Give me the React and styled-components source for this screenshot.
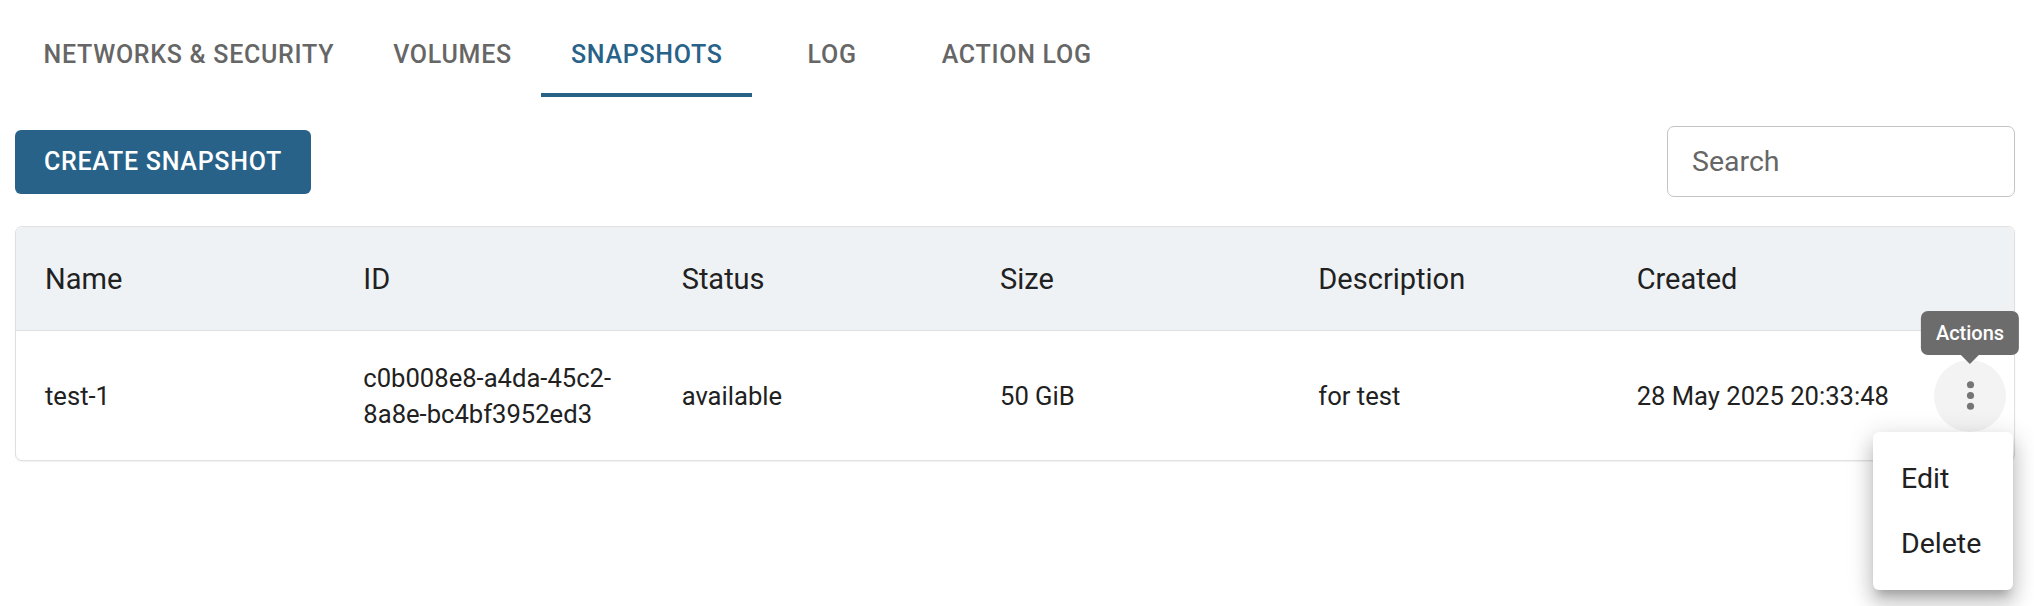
import React from "react";
import styled, { createGlobalStyle, css } from "styled-components";

const GlobalStyle = createGlobalStyle`
  html, body {
    margin: 0;
    padding: 0;
    background: #ffffff;
    font-family: Roboto, "Noto Sans", "Liberation Sans", sans-serif;
    color: #212121;
  }
  * { box-sizing: border-box; }
`;

const BLUE = "#296289";

const Page = styled.div`
  display: flex;
  flex-direction: column;
  min-height: 606px;
  padding: 12px 19px 0 15px;
  width: 2034px;
`;

const TabBar = styled.nav`
  display: flex;
  height: 85px;
  margin-left: -1px;
`;

const Tab = styled.div`
  position: relative;
  display: flex;
  align-items: center;
  justify-content: center;
  height: 85px;
  min-width: 160px;
  padding: 0 29.5px;
  font-size: 25px;
  font-weight: 500;
  letter-spacing: 0.72px;
  text-transform: uppercase;
  color: ${(p) => (p.$active ? BLUE : "#666666")};
  cursor: pointer;
  ${(p) =>
    p.$active &&
    css`
      &::after {
        content: "";
        position: absolute;
        left: 0;
        right: 0;
        bottom: 0;
        height: 4px;
        background: ${BLUE};
      }
    `}
`;

const Toolbar = styled.div`
  display: flex;
  align-items: center;
  justify-content: space-between;
  height: 71px;
  margin-top: 29px;
`;

const PrimaryButton = styled.button`
  height: 64px;
  padding: 0 29px;
  border: none;
  border-radius: 6px;
  background: ${BLUE};
  color: #ffffff;
  font-family: inherit;
  font-size: 25px;
  font-weight: 500;
  letter-spacing: 0.72px;
  text-transform: uppercase;
  cursor: pointer;
`;

const SearchField = styled.input`
  width: 348px;
  height: 71px;
  padding: 0 24px;
  border: 1px solid #c4c4c4;
  border-radius: 7px;
  font-family: inherit;
  font-size: 28.5px;
  color: #212121;
  outline: none;
  &::placeholder {
    color: #666666;
    opacity: 1;
  }
`;

const TableCard = styled.div`
  margin-top: 29px;
  border: 1px solid #e0e0e0;
  border-radius: 7px;
  box-shadow: 0 1px 2px rgba(0, 0, 0, 0.06);
  background: #ffffff;
`;

const Row = styled.div`
  display: grid;
  grid-template-columns: repeat(6, 1fr) 88px;
`;

const HeaderRow = styled(Row)`
  height: 104px;
  background: #eff2f5;
  border-bottom: 1px solid #e0e0e0;
  border-radius: 7px 7px 0 0;
`;

const BodyRow = styled(Row)`
  height: 129px;
`;

const HeadCell = styled.div`
  display: flex;
  align-items: center;
  padding: 0 29px;
  font-size: 29px;
  font-weight: 400;
  color: #212121;
`;

const Cell = styled.div`
  display: flex;
  align-items: center;
  padding: 0 29px;
  font-size: 25.6px;
  line-height: 36px;
  color: #212121;
`;

const ActionCell = styled.div`
  display: flex;
  align-items: center;
  justify-content: center;
`;

const Anchor = styled.div`
  position: relative;
  width: 72px;
  height: 72px;
`;

const KebabButton = styled.button`
  display: flex;
  align-items: center;
  justify-content: center;
  width: 72px;
  height: 72px;
  padding: 0;
  border: none;
  border-radius: 50%;
  background: #f3f3f3;
  cursor: pointer;
`;

const Tooltip = styled.div`
  position: absolute;
  bottom: calc(100% + 5px);
  left: 50%;
  transform: translateX(-50%);
  display: flex;
  align-items: center;
  justify-content: center;
  height: 44px;
  padding: 0 15px;
  border-radius: 7px;
  background: #6c6c6c;
  color: #ffffff;
  font-size: 20px;
  font-weight: 500;
  white-space: nowrap;
  z-index: 3;
  &::after {
    content: "";
    position: absolute;
    top: 100%;
    left: 50%;
    transform: translateX(-50%);
    border-left: 9px solid transparent;
    border-right: 9px solid transparent;
    border-top: 9px solid #6c6c6c;
  }
`;

const Menu = styled.ul`
  position: absolute;
  top: 100%;
  right: -7px;
  width: 140px;
  margin: 0;
  padding: 14px 0;
  list-style: none;
  background: #ffffff;
  border-radius: 6px;
  box-shadow: 0 9px 9px -5px rgba(0, 0, 0, 0.2),
    0 14px 18px 2px rgba(0, 0, 0, 0.14), 0 5px 25px 4px rgba(0, 0, 0, 0.12);
  z-index: 4;
`;

const MenuItem = styled.li`
  display: flex;
  align-items: center;
  height: 65px;
  padding: 0 28px;
  font-size: 28.5px;
  color: #212121;
  cursor: pointer;
`;

const MoreVert = () => (
  <svg width="43" height="43" viewBox="0 0 24 24" fill="#757575" aria-hidden="true">
    <circle cx="12" cy="6" r="2" />
    <circle cx="12" cy="12" r="2" />
    <circle cx="12" cy="18" r="2" />
  </svg>
);

const tabs = ["Networks & Security", "Volumes", "Snapshots", "Log", "Action Log"];
const columns = ["Name", "ID", "Status", "Size", "Description", "Created"];
const rows = [
  {
    name: "test-1",
    id: "c0b008e8-a4da-45c2-8a8e-bc4bf3952ed3",
    status: "available",
    size: "50 GiB",
    description: "for test",
    created: "28 May 2025 20:33:48",
  },
];

export default function App() {
  return (
    <>
      <GlobalStyle />
      <Page>
        <TabBar>
          {tabs.map((t) => (
            <Tab key={t} $active={t === "Snapshots"}>
              {t}
            </Tab>
          ))}
        </TabBar>
        <Toolbar>
          <PrimaryButton>Create Snapshot</PrimaryButton>
          <SearchField placeholder="Search" />
        </Toolbar>
        <TableCard>
          <HeaderRow>
            {columns.map((c) => (
              <HeadCell key={c}>{c}</HeadCell>
            ))}
            <HeadCell />
          </HeaderRow>
          {rows.map((r) => (
            <BodyRow key={r.id}>
              <Cell>{r.name}</Cell>
              <Cell>
                <span>{r.id}</span>
              </Cell>
              <Cell>{r.status}</Cell>
              <Cell>{r.size}</Cell>
              <Cell>{r.description}</Cell>
              <Cell>{r.created}</Cell>
              <ActionCell>
                <Anchor>
                  <Tooltip>Actions</Tooltip>
                  <KebabButton aria-label="Actions">
                    <MoreVert />
                  </KebabButton>
                  <Menu>
                    <MenuItem>Edit</MenuItem>
                    <MenuItem>Delete</MenuItem>
                  </Menu>
                </Anchor>
              </ActionCell>
            </BodyRow>
          ))}
        </TableCard>
      </Page>
    </>
  );
}
